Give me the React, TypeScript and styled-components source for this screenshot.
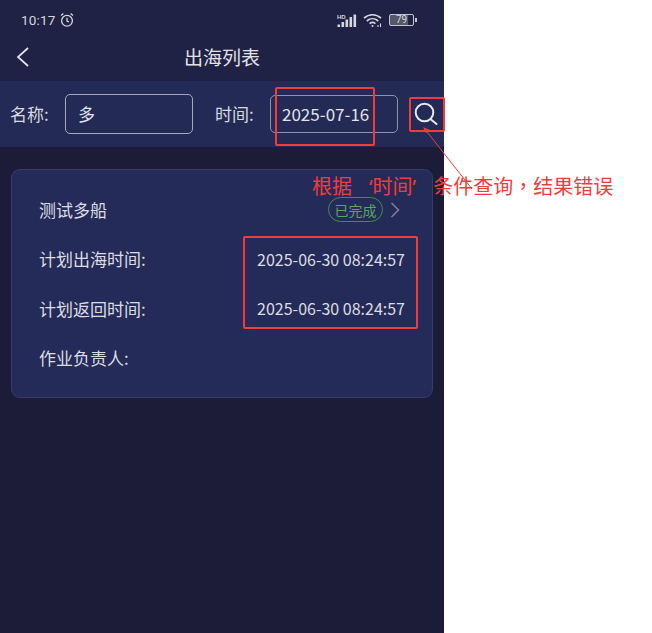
import React from 'react';
import styled, { createGlobalStyle } from 'styled-components';

const GlobalStyle = createGlobalStyle`
  html, body {
    margin: 0;
    padding: 0;
    background: #fff;
  }
`;

const App: React.FC = () => (
  <>
    <GlobalStyle />
    <Page>
      <Phone>
        <StatusBar>
          <Clock>
            10:17
            <svg width="16" height="16" viewBox="0 0 16 16" fill="none" stroke="#d5d7df" strokeWidth="1.3">
              <circle cx="8" cy="8.8" r="5.4" />
              <path d="M8 5.8v3.2l2 1M2 3.6l2.4-2M14 3.6l-2.4-2" />
            </svg>
          </Clock>
          <StatusIcons>
            <svg width="21" height="15" viewBox="0 0 21 15" fill="#d5d7df">
              <text x="0" y="5.5" fontSize="6" fontWeight="700" fontFamily="Liberation Sans, sans-serif">HD</text>
              <rect x="0.5" y="11.500" width="2.600" height="2.500" />
              <rect x="4.500" y="9" width="2.600" height="5" />
              <rect x="8.500" y="6.500" width="2.600" height="7.500" />
              <rect x="12.500" y="4" width="2.600" height="10" />
              <rect x="16.500" y="1.500" width="2.600" height="12.500" />
            </svg>
            <svg width="20" height="15" viewBox="0 0 20 15" fill="none" stroke="#d5d7df" strokeWidth="1.7">
              <path d="M1 5.2c5-4.6 12-4.6 17 0M3.8 8c3.4-3 8-3 11.400 0M6.600 10.700c1.800-1.500 4-1.500 5.800 0" />
              <circle cx="9.500" cy="13" r="1" fill="#d5d7df" stroke="none" />
              <path d="M15 14v-2M17.500 14v-3.500" strokeWidth="1.100" />
            </svg>
            <Battery>
              <BatteryBody>79</BatteryBody>
              <BatteryTip />
            </Battery>
          </StatusIcons>
        </StatusBar>

        <NavBar>
          <BackButton>
            <svg width="13" height="20" viewBox="0 0 13 20" fill="none" stroke="#e4e6ec" strokeWidth="1.700">
              <path d="M12 1 2 10l10 9" />
            </svg>
          </BackButton>
          <NavTitle>出海列表</NavTitle>
        </NavBar>

        <FilterBar>
          <FieldLabel>名称:</FieldLabel>
          <NameBox>多</NameBox>
          <TimeLabel>时间:</TimeLabel>
          <DateBox>2025-07-16</DateBox>
          <SearchButton>
            <svg width="24" height="24" viewBox="0 0 24 24" fill="none" stroke="#e6e8ee" strokeWidth="2">
              <circle cx="10.500" cy="10.500" r="8.800" />
              <path d="m17 17.500 5.500 4.500" strokeLinecap="round" />
            </svg>
          </SearchButton>
        </FilterBar>

        <Content>
          <Card>
            <CardHead>
              <span>测试多船</span>
              <HeadRight>
                <StatusPill>已完成</StatusPill>
                <svg width="10" height="16" viewBox="0 0 10 16" fill="none" stroke="#7d8196" strokeWidth="1.500">
                  <path d="m1.500 1 7 7-7 7" />
                </svg>
              </HeadRight>
            </CardHead>
            <Row>
              <span>计划出海时间:</span>
              <Value>2025-06-30 08:24:57</Value>
            </Row>
            <Row>
              <span>计划返回时间:</span>
              <Value>2025-06-30 08:24:57</Value>
            </Row>
            <Row>
              <span>作业负责人:</span>
            </Row>
          </Card>
        </Content>
      </Phone>

      {/* red review marks drawn on top of the screenshot */}
      <Mark $left={275} $top={87} $width={100} $height={59} />
      <Mark $left={409} $top={97} $width={36} $height={35} />
      <Mark $left={243} $top={236} $width={175} $height={93} />
      <Arrow width="60" height="70" viewBox="0 0 60 70" fill="none">
        <path d="M3 3 51 64" stroke="#f23c3c" strokeWidth="1" />
        <path d="M2 2l7 3-4 3z" fill="#f23c3c" />
      </Arrow>
      <Note>
        {'根据   ‘时间’   条件查询'}
        <NoteComma>，</NoteComma>
        结果错误
      </Note>
    </Page>
  </>
);

const Page = styled.div`
  position: relative;
  width: 652px;
  height: 633px;
  overflow: hidden;
  background: #fff;
  font-family: 'Noto Sans CJK SC', 'Noto Sans', sans-serif;
`;

const Phone = styled.div`
  width: 444px;
  height: 633px;
  display: flex;
  flex-direction: column;
  background: #1d1c38;
  color: #dfe0e4;
`;

const StatusBar = styled.div`
  height: 40px;
  box-sizing: border-box;
  padding: 0 27px 0 21px;
  display: flex;
  align-items: center;
  justify-content: space-between;
  background: #1f2145;
`;

const Clock = styled.div`
  display: flex;
  align-items: center;
  gap: 3px;
  font-family: 'Roboto', sans-serif;
  font-size: 13.5px;
  letter-spacing: 0.2px;
  color: #d5d7df;
`;

const StatusIcons = styled.div`
  display: flex;
  align-items: center;
  gap: 5px;
`;

const Battery = styled.div`
  display: flex;
  align-items: center;
  gap: 1px;
  margin-left: 1px;
`;

const BatteryBody = styled.div`
  width: 25px;
  height: 12px;
  box-sizing: border-box;
  border: 1px solid #c4c6d0;
  border-radius: 2px;
  background: linear-gradient(90deg, #55586a 78%, transparent 78%);
  color: #d5d7df;
  font-family: 'Roboto', sans-serif;
  font-size: 10px;
  line-height: 10px;
  text-align: center;
`;

const BatteryTip = styled.div`
  width: 2px;
  height: 4px;
  background: #c4c6d0;
`;

const NavBar = styled.div`
  position: relative;
  height: 41px;
  box-sizing: border-box;
  padding-bottom: 8px;
  display: flex;
  align-items: center;
  justify-content: center;
  background: #1f2145;
`;

const BackButton = styled.div`
  position: absolute;
  left: 16px;
  top: 7px;
  display: flex;
`;

const NavTitle = styled.div`
  font-size: 19px;
  line-height: 28px;
  color: #e2e3e7;
`;

const FilterBar = styled.div`
  height: 66px;
  display: flex;
  align-items: center;
  padding-left: 10px;
  background: #232a56;
`;

const FieldLabel = styled.span`
  width: 55px;
  flex: none;
  padding-bottom: 1px;
  font-size: 17px;
  color: #d8d9de;
`;

const TimeLabel = styled(FieldLabel)`
  width: 55px;
  margin-left: 22px;
`;

const InputBox = styled.div`
  box-sizing: border-box;
  height: 40px;
  padding-bottom: 2px;
  display: flex;
  align-items: center;
  border: 1px solid #a6a9bb;
  border-radius: 5px;
  font-size: 17px;
  color: #e2e3e7;
`;

const NameBox = styled(InputBox)`
  width: 128px;
  padding-left: 12px;
`;

const DateBox = styled(InputBox)`
  width: 128px;
  margin-right: 16px;
  padding-left: 11px;
  height: 38px;
  border-color: #8f93a8;
`;

const SearchButton = styled.div`
  display: flex;
`;

const Content = styled.div`
  flex: 1;
  padding: 22px 11px 0;
`;

const Card = styled.div`
  box-sizing: border-box;
  height: 229px;
  padding: 15px 27px 0;
  border: 1px solid #363d6c;
  border-radius: 9px;
  background: #252b59;
`;

const Row = styled.div`
  height: 49.500px;
  display: flex;
  align-items: center;
  justify-content: space-between;
  font-size: 17px;
  color: #dcdde1;
`;

const CardHead = styled(Row)`
  height: 49px;
`;

const HeadRight = styled.div`
  display: flex;
  align-items: center;
  gap: 7px;
  margin-right: 5px;
`;

const StatusPill = styled.span`
  box-sizing: border-box;
  height: 25px;
  padding: 0 5.500px;
  display: inline-flex;
  align-items: center;
  border: 1px solid #3f8f48;
  border-radius: 13px;
  font-size: 14px;
  color: #57a85a;
`;

const Value = styled.span`
  font-size: 16px;
`;

const Mark = styled.div<{ $left: number; $top: number; $width: number; $height: number }>`
  position: absolute;
  left: ${p => p.$left}px;
  top: ${p => p.$top}px;
  width: ${p => p.$width}px;
  height: ${p => p.$height}px;
  box-sizing: border-box;
  border: 2px solid #f23c3c;
  border-radius: 2px;
`;

const Arrow = styled.svg`
  position: absolute;
  left: 421px;
  top: 125px;
`;

const Note = styled.div`
  position: absolute;
  left: 312px;
  top: 171px;
  font-family: 'Noto Sans', 'Noto Sans CJK SC', sans-serif;
  font-size: 20px;
  line-height: 29px;
  word-spacing: 0.5px;
  white-space: pre;
  color: #f23c3c;
`;

const NoteComma = styled.span`
  font-family: 'Noto Sans CJK TC', sans-serif;
`;

export default App;
